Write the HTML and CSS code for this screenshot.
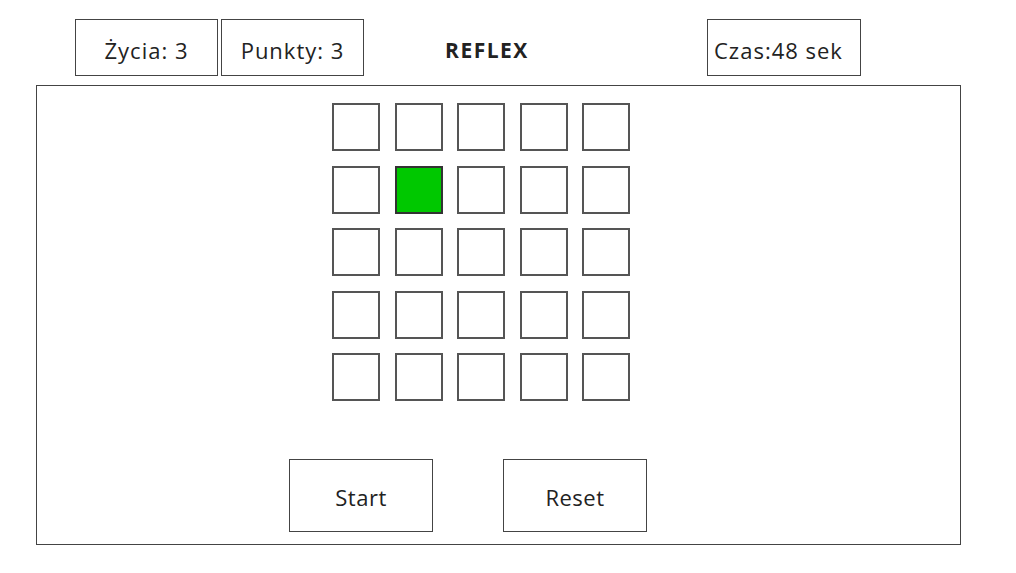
FILE: index.html
```html
<!DOCTYPE html>
<html lang="pl">
<head>
<meta charset="UTF-8">
<meta name="viewport" content="width=device-width, initial-scale=1.0">
<title>Reflex</title>
<link rel="stylesheet" href="styles.css">
</head>
<body>
<div class="top">
<div class="box lives">Życia: 3</div>
<div class="box points">Punkty: 3</div>
<div class="title">REFLEX</div>
<div class="box time">Czas:48 sek</div>
</div>
<div class="board">
<div class="grid">
<div class="cell"></div><div class="cell"></div><div class="cell"></div><div class="cell"></div><div class="cell"></div>
<div class="cell"></div><div class="cell active"></div><div class="cell"></div><div class="cell"></div><div class="cell"></div>
<div class="cell"></div><div class="cell"></div><div class="cell"></div><div class="cell"></div><div class="cell"></div>
<div class="cell"></div><div class="cell"></div><div class="cell"></div><div class="cell"></div><div class="cell"></div>
<div class="cell"></div><div class="cell"></div><div class="cell"></div><div class="cell"></div><div class="cell"></div>
</div>
<div class="buttons">
<button class="btn" id="start">Start</button>
<button class="btn" id="reset">Reset</button>
</div>
</div>
</body>
</html>
```

FILE: styles.css
```css
body {
margin: 0;
font-family: "Open Sans", sans-serif;
color: #222;
background-color: #fff;
}
.top {
display: flex;
align-items: center;
margin: 19px 0 0 75px;
height: 57px;
}
.box {
box-sizing: border-box;
height: 57px;
border: 1px solid #444;
padding-top: 4px;
font-size: 22px;
letter-spacing: 1px;
display: flex;
align-items: center;
justify-content: center;
}
.lives {
width: 143px;
}
.points {
width: 143px;
margin-left: 3px;
}
.title {
margin-left: 78px;
padding-top: 4px;
width: 90px;
font-size: 21px;
font-weight: bold;
letter-spacing: 1.5px;
text-align: center;
}
.time {
width: 154px;
margin-left: 175px;
justify-content: flex-start;
padding-left: 6px;
}
.board {
box-sizing: border-box;
margin: 9px 0 0 36px;
width: 925px;
height: 460px;
border: 1px solid #444;
padding-top: 17px;
}
.grid {
display: grid;
grid-template-columns: repeat(5, 48px);
grid-auto-rows: 48px;
gap: 14.5px;
margin-left: 295px;
}
.cell {
box-sizing: border-box;
border: 2px solid #555;
background-color: #fff;
}
.cell.active {
background-color: #00c800;
border-color: #333;
}
.buttons {
display: flex;
gap: 70px;
margin: 58px 0 0 252px;
}
.btn {
box-sizing: border-box;
width: 144px;
height: 73px;
border: 1px solid #444;
background-color: #fff;
font-family: "Open Sans", sans-serif;
font-size: 22px;
letter-spacing: 0.5px;
color: #222;
padding: 2px 0 0 0;
}
```
